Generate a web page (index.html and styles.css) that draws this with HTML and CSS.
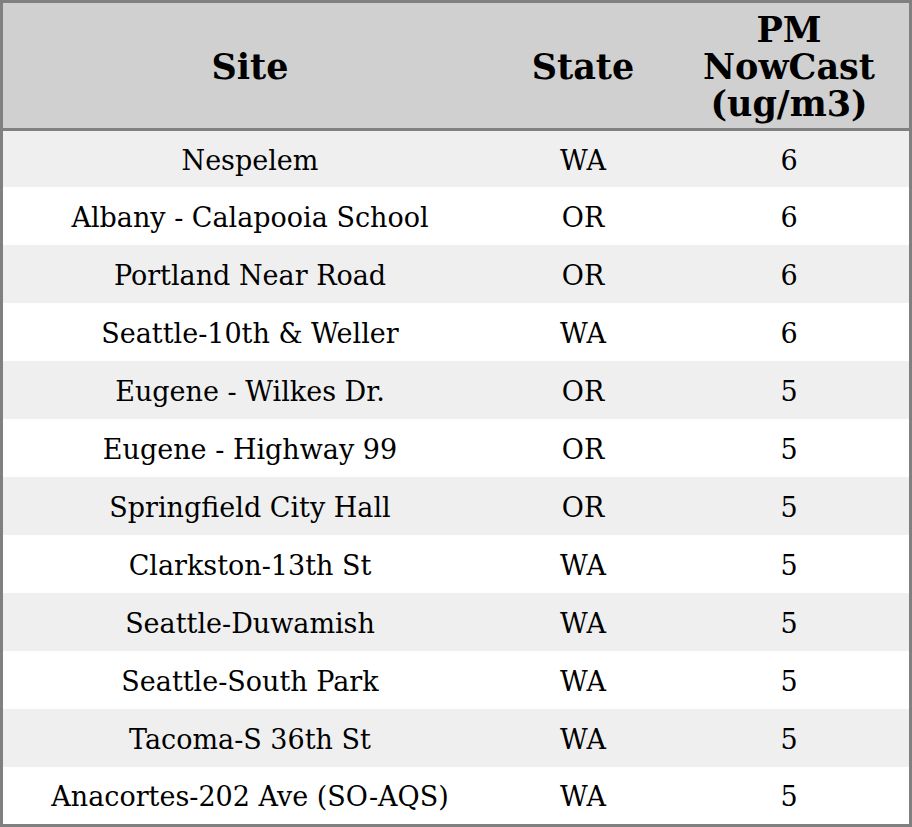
FILE: index.html
```html
<!DOCTYPE html>
<html>
<head>
<meta charset="utf-8">
<link rel="stylesheet" href="styles.css">
</head>
<body>
<table class="tbl">
  <colgroup>
    <col class="c-site">
    <col class="c-state">
    <col class="c-pm">
  </colgroup>
  <thead>
    <tr><th>Site</th><th>State</th><th>PM<br>NowCast<br>(ug/m3)</th></tr>
  </thead>
  <tbody>
    <tr><td>Nespelem</td><td>WA</td><td>6</td></tr>
    <tr><td>Albany - Calapooia School</td><td>OR</td><td>6</td></tr>
    <tr><td>Portland Near Road</td><td>OR</td><td>6</td></tr>
    <tr><td>Seattle-10th &amp; Weller</td><td>WA</td><td>6</td></tr>
    <tr><td>Eugene - Wilkes Dr.</td><td>OR</td><td>5</td></tr>
    <tr><td>Eugene - Highway 99</td><td>OR</td><td>5</td></tr>
    <tr><td>Springfield City Hall</td><td>OR</td><td>5</td></tr>
    <tr><td>Clarkston-13th St</td><td>WA</td><td>5</td></tr>
    <tr><td>Seattle-Duwamish</td><td>WA</td><td>5</td></tr>
    <tr><td>Seattle-South Park</td><td>WA</td><td>5</td></tr>
    <tr><td>Tacoma-S 36th St</td><td>WA</td><td>5</td></tr>
    <tr><td>Anacortes-202 Ave (SO-AQS)</td><td>WA</td><td>5</td></tr>
  </tbody>
</table>
</body>
</html>
```

FILE: styles.css
```css
html, body {
  margin: 0;
  padding: 0;
  background: #ffffff;
}
.tbl {
  width: 912px;
  height: 827px;
  border-collapse: separate;
  border-spacing: 0;
  border: 3px solid #808080;
  box-sizing: border-box;
  table-layout: fixed;
  font-family: "DejaVu Serif", serif;
  color: #000;
}
.c-site { width: 494px; }
.c-state { width: 172px; }
.c-pm { width: 240px; }
.tbl thead tr { height: 128px; }
.tbl th {
  background: #d0d0d0;
  font-size: 35px;
  font-weight: bold;
  line-height: 37px;
  padding: 1px 0 0 0;
  text-align: center;
  vertical-align: middle;
  border-bottom: 3px solid #808080;
}
.tbl tbody tr { height: 58px; }
.tbl tbody tr:first-child { height: 56px; }
.tbl tbody tr:last-child { height: 57px; }
.tbl td {
  font-size: 27px;
  line-height: 32px;
  text-align: center;
  vertical-align: middle;
  padding: 3px 0 0 0;
}
.tbl tbody tr:nth-child(odd) td {
  background: #efefef;
}
```
